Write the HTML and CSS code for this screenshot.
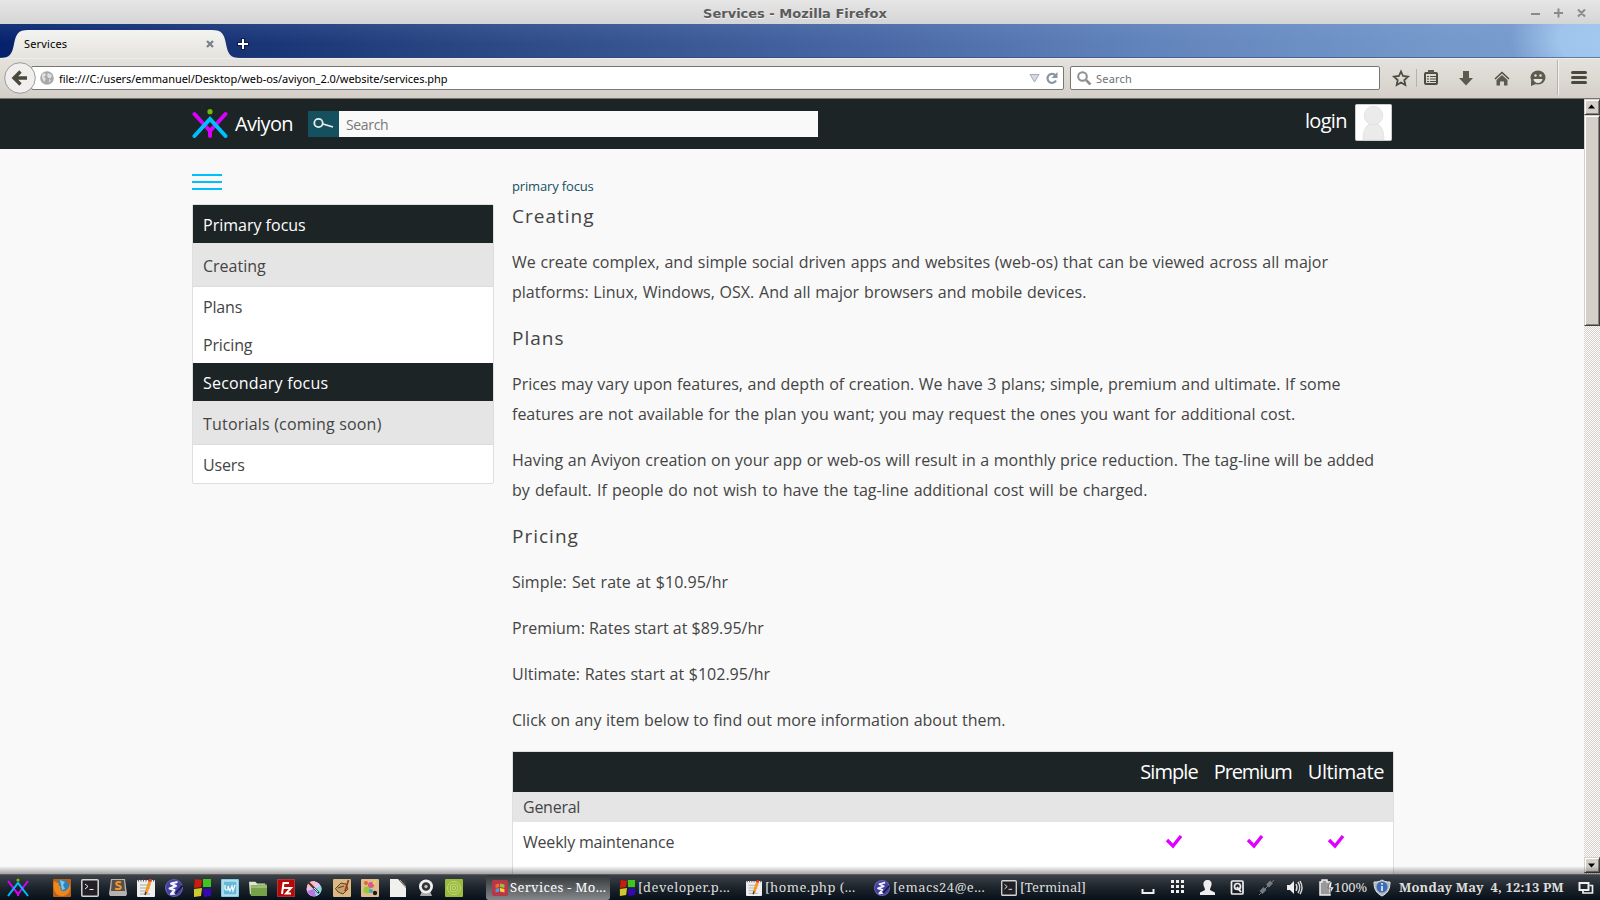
FILE: index.html
```html
<!DOCTYPE html>
<html lang="en">
<head>
<meta charset="utf-8">
<title>Services</title>
<link rel="stylesheet" href="styles.css">
</head>
<body>
<svg class="defs" width="0" height="0">
  <defs>
    <symbol id="logo" viewBox="0 0 36 30">
      <g fill="none" stroke-width="4" stroke-linecap="round" stroke-linejoin="round">
        <path stroke="#d900ff" d="M2.500 5L18 22L33.500 5M18 22V27" />
        <path stroke="#00bfff" d="M2.500 27L18 10L33.500 27" stroke-linejoin="miter"/>
      </g>
      <circle cx="18" cy="2.700" r="2.600" fill="#77b800"/>
    </symbol>
    <symbol id="check" viewBox="0 0 18 16">
      <path d="M2 6L8 12L16 2" fill="none" stroke="#e000ff" stroke-width="3.400"/>
    </symbol>
    <symbol id="term" viewBox="0 0 18 18">
      <rect x=".8" y=".8" width="16.400" height="16.400" rx="1" fill="#222026" stroke="#d4d4d0" stroke-width="1.500"/>
      <path d="M4 5l3 2.500L4 10M8.500 10.500h4" fill="none" stroke="#eee"/>
    </symbol>
    <symbol id="notes" viewBox="0 0 18 18">
      <rect x="0" y="1" width="18" height="17" rx="1" fill="#eee"/>
      <path d="M1 1.500h16" stroke="#555" stroke-width="2" stroke-dasharray="1 1.500"/>
      <path d="M3 6h11M3 9h10M3 12h8M3 15h10" stroke="#aaa"/>
      <path d="M13 2L9 14" stroke="#f39a1b" stroke-width="3"/><path d="M13.500 0L13 2.500" stroke="#d33" stroke-width="3"/><path d="M9 13l-1 3" stroke="#333" stroke-width="1.500"/>
    </symbol>
    <symbol id="emacs" viewBox="0 0 18 18">
      <circle cx="9" cy="9" r="9" fill="#6865b0"/><circle cx="9" cy="9" r="8" fill="#4340a0"/>
      <path d="M12.500 3L6 4.500L11 7L4.500 9.500L9.500 11L6 15L11 14.500" fill="none" stroke="#f4f4ff" stroke-width="2" stroke-linejoin="round"/>
      <path d="M17.500 6.500L10 15" stroke="#16163c" stroke-width="1.600"/>
    </symbol>
    <symbol id="blocks" viewBox="0 0 18 18">
      <path d="M2 0L9 1 8 8 1 9z" fill="#cf1b0c"/><path d="M10 0h8v8h-8z" fill="#3fc51e"/><path d="M1 10l8-1-1 8-7 1z" fill="#cfc92c"/><path d="M10 10l8-1v8l-7 1z" fill="#3508b5"/>
    </symbol>
  </defs>
</svg>

<header class="titlebar">
  <span class="side"></span>
  <span class="window-title">Services - Mozilla Firefox</span>
  <span class="side controls">
    <svg width="58" height="14" viewBox="0 0 58 14"><g fill="none" stroke="#8a8a8a" stroke-width="2"><path d="M1 8h9M24 7h9M28.500 2.500v9M48 3.500l7 7M55 3.500l-7 7"/></g></svg>
  </span>
</header>

<div class="tabstrip">
  <svg class="tab-shape" width="240" height="34" viewBox="0 0 240 34">
    <defs><linearGradient id="tabfill" x2="0" y2="1"><stop offset="0" stop-color="#f3f3f1"/><stop offset="1" stop-color="#e5e3de"/></linearGradient></defs>
    <path d="M0 34C10 34 12 30 14 20C16 10 18 6 28 6H212C222 6 224 10 226 20C228 30 230 34 240 34Z" fill="url(#tabfill)"/>
  </svg>
  <div class="tab-row">
    <span class="tab-title">Services</span>
    <svg width="8" height="8" viewBox="0 0 8 8"><path d="M1 1l6 6M7 1L1 7" stroke="#7b8287" stroke-width="2.300"/></svg>
    <svg class="new-tab" width="12" height="12" viewBox="0 0 12 12"><path d="M6 0v12M0 6h12" stroke="#0d1a48" stroke-width="4"/><path d="M6 1v10M1 6h10" stroke="#fff" stroke-width="2"/></svg>
  </div>
</div>

<nav class="toolbar">
  <svg class="back" width="32" height="32" viewBox="0 0 32 32"><circle cx="16" cy="16" r="15.300" fill="#f0efed" stroke="#9a9b9b"/><path d="M16.500 9.500L10 16l6.500 6.500M11 16h12" fill="none" stroke="#4b493d" stroke-width="3.400"/></svg>
  <div class="urlbar">
    <svg width="14" height="14" viewBox="0 0 14 14"><circle cx="7" cy="7" r="6.800" fill="#a8a8a8"/><path d="M2 3l3-1 1 2-2 2 2 2-2 3-2-4zM8 2l4 2-1 3-3 0-1-3zM9 8l2 1-2 3z" fill="#dedede"/></svg>
    <span class="url">file:///C:/users/emmanuel/Desktop/web-os/aviyon_2.0/website/services.php</span>
    <svg width="30" height="14" viewBox="0 0 30 14"><path d="M1 3.500h9L5.500 11z" fill="#d5dae2" stroke="#a6adb8"/><path d="M26.500 4.500A4.500 4.500 0 1 0 27 9.500" fill="none" stroke="#8996a2" stroke-width="2.200"/><path d="M28.500 1v6h-6z" fill="#8996a2"/></svg>
  </div>
  <div class="searchbar">
    <svg width="15" height="15" viewBox="0 0 15 15"><circle cx="5.500" cy="5.500" r="4.300" fill="none" stroke="#8f8f8f" stroke-width="2"/><path d="M9 9l4.500 4.500" stroke="#8f8f8f" stroke-width="2.500"/></svg>
    <span>Search</span>
  </div>
  <svg class="tools" width="206" height="41" viewBox="1386 58 206 41">
    <g fill="none" stroke="#4e4c40" stroke-width="2">
      <path d="M1401 71.500l2 4.500 5 .6-3.700 3.400 1 5-4.300-2.500-4.300 2.500 1-5-3.700-3.400 5-.6z" stroke-width="1.800"/>
      <rect x="1425" y="73" width="12" height="11" rx="1"/><path d="M1427 76.500h2M1430 76.500h6M1427 79h2M1430 79h6M1427 81.500h2M1430 81.500h6" stroke-width="1.200"/>
      <path d="M1495 79l7-6.500 7 6.500" stroke-width="1.500"/>
      <path d="M1572.500 72.500h13M1572.500 77.500h13M1572.500 82.500h13" stroke="#4b493d" stroke-width="3" stroke-linecap="round"/>
    </g>
    <g fill="#5d5b4f">
      <path d="M1428 70h6v3h-6zM1463 71h6v7h4l-7 7.500-7-7.500h4zM1502 75l5.500 5v5.500h-3.500v-4h-4v4h-3.500v-5.500z"/>
      <ellipse cx="1538" cy="77.500" rx="7.500" ry="7"/><path d="M1531 80l0 6 5-2z"/>
    </g>
    <path d="M1533.500 79h9a4.500 4 0 0 1-9 0z" fill="#e6e3dc"/><circle cx="1535.500" cy="75.500" r="1.200" fill="#e6e3dc"/><circle cx="1540.500" cy="75.500" r="1.200" fill="#e6e3dc"/>
    <path d="M1416.500 69v18M1557.500 60v35" stroke="#b3b3b0"/><path d="M1558.500 60v35" stroke="#f3f2ef"/>
  </svg>
</nav>

<div class="viewport">
  <div class="page">
    <div class="site-header">
      <svg class="logo" width="36" height="30"><use href="#logo"/></svg>
      <span class="brand">Aviyon</span>
      <div class="site-search">
        <span class="search-btn"><svg width="22" height="14" viewBox="0 0 22 14"><circle cx="5.500" cy="6" r="4.200" fill="none" stroke="#eee" stroke-width="1.800"/><path d="M10 7l10 3" stroke="#eee" stroke-width="1.800"/></svg></span>
        <span class="placeholder">Search</span>
      </div>
      <span class="login">login</span>
      <svg class="avatar" width="37" height="37" viewBox="0 0 37 37"><rect x=".5" y=".5" width="36" height="36" rx="1" fill="#fff" stroke="#ccc"/><g fill="#ebebeb" stroke="#ddd" stroke-width=".7"><path d="M8 36C8 25 12 19 18.500 19S29 25 29 36z"/><circle cx="18.500" cy="11.500" r="9.300"/></g></svg>
    </div>
    <div class="columns">
      <aside>
        <div class="burger"><i></i><i></i><i></i></div>
        <ul class="menu">
          <li class="head">Primary focus</li>
          <li class="on">Creating</li>
          <li class="tight">Plans</li>
          <li class="tight">Pricing</li>
          <li class="head loose">Secondary focus</li>
          <li class="on loose">Tutorials (coming soon)</li>
          <li class="tight">Users</li>
        </ul>
      </aside>
      <main>
        <div class="crumb">primary focus</div>
        <h2>Creating</h2>
        <p><span class="l1">We create complex, and simple social driven apps and websites (web-os) that can be viewed across all major</span><br><span class="l2">platforms: Linux, Windows, OSX. And all major browsers and mobile devices.</span></p>
        <h2>Plans</h2>
        <p><span class="l3">Prices may vary upon features, and depth of creation. We have 3 plans; simple, premium and ultimate. If some</span><br><span class="l4">features are not available for the plan you want; you may request the ones you want for additional cost.</span></p>
        <p><span class="l5">Having an Aviyon creation on your app or web-os will result in a monthly price reduction. The tag-line will be added</span><br><span class="l6">by default. If people do not wish to have the tag-line additional cost will be charged.</span></p>
        <h2>Pricing</h2>
        <p><span class="l7">Simple: Set rate at $10.95/hr</span></p>
        <p>Premium: Rates start at $89.95/hr</p>
        <p><span class="l9">Ultimate: Rates start at $102.95/hr</span></p>
        <p><span class="l10">Click on any item below to find out more information about them.</span></p>
        <div class="table">
          <div class="trow thead"><span class="simple">Simple</span><span class="premium">Premium</span><span class="ultimate">Ultimate</span></div>
          <div class="section">General</div>
          <div class="trow feature"><span>Weekly maintenance</span><svg width="18" height="16"><use href="#check"/></svg><svg width="18" height="16"><use href="#check"/></svg><svg width="18" height="16"><use href="#check"/></svg></div>
        </div>
      </main>
    </div>
  </div>
  <div class="scrollbar">
    <div class="sb-btn"><svg width="8" height="5" viewBox="0 0 8 5"><path d="M0 4.500h7L3.500 .5z"/></svg></div>
    <div class="thumb"></div>
    <div class="track"></div>
    <div class="sb-btn"><svg width="8" height="5" viewBox="0 0 8 5"><path d="M0 .5h7L3.500 4.500z"/></svg></div>
  </div>
  <div class="panel-shadow"></div>
</div>

<footer class="taskbar">
  <svg class="start" width="24" height="20" viewBox="0 0 24 20"><path d="M2 3l10 13L22 3M12 15v3" fill="none" stroke="#d900ff" stroke-width="2"/><path d="M2 18L12 5l10 13" fill="none" stroke="#00bfff" stroke-width="2"/><circle cx="12" cy="2" r="1.600" fill="#77b800"/></svg>
  <div class="launchers">
    <svg viewBox="0 0 18 18"><rect width="18" height="18" rx="1" fill="#b9601b"/><circle cx="9.500" cy="8" r="7" fill="#2c82bd"/><path d="M7 1l5 2-2 3 2 4-3 1z" fill="#80c5e8"/><path d="M1 2c2 1 3 2 5 2-1 2 0 3 2 4-2 2 1 5 4 4 3-1 5-4 4-8 3 6 0 12-6 13S-1 12 1 2z" fill="#f1871b"/></svg>
    <svg><use href="#term"/></svg>
    <svg viewBox="0 0 18 18"><path d="M2 0h14l2 15-1 2H1l-1-2z" fill="#b6b3ae"/><path d="M3 1h12l1 11H2z" fill="#554f4b"/><path d="M12 3.500C8 2 6 4 8 6l3 1c2 2 0 4-5 2.500" fill="none" stroke="#f5982b" stroke-width="2"/></svg>
    <svg><use href="#notes"/></svg>
    <svg><use href="#emacs"/></svg>
    <svg><use href="#blocks"/></svg>
    <svg viewBox="0 0 18 18"><rect width="18" height="18" rx="1" fill="#7fcbe6"/><rect x="2" y="2" width="14" height="14" fill="#65b8d9" stroke="#dff5fb"/><path d="M4 6v4l1 1h2V7l2 5 2-5 1 5 2-6" fill="none" stroke="#fff" stroke-width="1.200"/></svg>
    <svg viewBox="0 0 20 18"><path d="M0 2h7l2 2h9v12H1z" fill="#dfe5d3"/><path d="M2 6h6l2-1h10v13H2z" fill="#78a24a"/><path d="M2 7h6l2-1h10v3H2z" fill="#9dbd74"/></svg>
    <svg viewBox="0 0 18 18"><rect x=".5" y=".5" width="17" height="17" fill="#b80808" stroke="#e55" stroke-dasharray="1 1"/><path d="M5 15L6.500 4H12M5.500 9H10M9.500 9H14L9 14.500H14" fill="none" stroke="#fff" stroke-width="2"/></svg>
    <svg viewBox="0 0 18 18"><circle cx="9" cy="10" r="7.500" fill="#e9c3ee"/><path d="M9 10L2 7a7.500 7.500 0 0 1 8-5z" fill="#ffb8b8"/><path d="M9 10l7-3a7.500 7.500 0 0 1-5 10z" fill="#7edce4"/><path d="M9 10l2 7a7.500 7.500 0 0 1-9-5z" fill="#b478e6"/><path d="M2 2L14 14" stroke="#333" stroke-width="1.800"/><path d="M9 9l4 4" stroke="#ddd"/></svg>
    <svg viewBox="0 0 18 18"><rect width="18" height="18" rx="1" fill="#dbb982"/><path d="M2.500 9.500L8 4l5 1 2 5-5 5-5-2zM5 9l6-2" fill="#c8a068" stroke="#5c4328"/><path d="M15.500 1L12 12" stroke="#9b3821" stroke-width="1.700"/></svg>
    <svg viewBox="0 0 18 18"><rect width="18" height="18" rx="1" fill="#dfbd91"/><circle cx="6" cy="11" r="3.500" fill="#9ac736"/><circle cx="10" cy="6" r="3" fill="#de5590"/><circle cx="5" cy="4" r="2" fill="#e3672c"/><circle cx="10" cy="12" r="2" fill="#36a6d1"/><path d="M12 5l3-3" stroke="#e6dd37" stroke-width="2"/><circle cx="14" cy="14" r="2.200" fill="#211b16"/></svg>
    <svg viewBox="0 0 18 18"><path d="M1 0h10l6 7v11H1z" fill="#f0f0ef"/><path d="M9 0h8v9z" fill="#39393b"/><path d="M11 1l6 7" stroke="#aaa"/></svg>
    <svg viewBox="0 0 18 18"><path d="M5 12h8l2 5H3z" fill="#aaa"/><circle cx="9" cy="7.500" r="7" fill="#f0f0f0"/><circle cx="9" cy="7.500" r="4.300" fill="#333"/><circle cx="9" cy="7.500" r="1.700" fill="#a9c2d0"/></svg>
    <svg viewBox="0 0 18 18"><rect width="18" height="18" rx="1" fill="#9abb42"/><g fill="none" stroke="#c3d777" stroke-width="1"><circle cx="9" cy="9" r="6.500"/><circle cx="9" cy="9" r="4"/><circle cx="9" cy="9" r="1.700"/></g></svg>
  </div>
  <div class="tasks">
    <div class="task active"><svg viewBox="0 0 18 18"><rect width="18" height="18" rx="2" fill="#b63748"/><path d="M4 5l4-1v4l-4 1z" fill="#f26b2b"/><path d="M9 4l5 1v4L9 8z" fill="#8bc53f"/><path d="M4 10l4-1v4l-4 1z" fill="#40a6dd"/><path d="M9 9l5 1v4l-5-1z" fill="#ffd23b"/></svg><span>Services - Mo...</span></div>
    <div class="task"><svg><use href="#blocks"/></svg><span class="wide">[developer.p...</span></div>
    <div class="task"><svg><use href="#notes"/></svg><span class="wide">[home.php (...</span></div>
    <div class="task emacs"><svg><use href="#emacs"/></svg><span class="wide">[emacs24@e...</span></div>
    <div class="task last"><svg><use href="#term"/></svg><span>[Terminal]</span></div>
  </div>
  <svg class="tray" width="194" height="24" viewBox="1140 876 194 24">
    <path d="M1142.500 889v4h11v-4" fill="none" stroke="#eee" stroke-width="2"/>
    <path d="M1171 881.500h13M1171 886.500h13M1171 891.500h13" stroke="#eee" stroke-width="3" stroke-dasharray="3 2"/>
    <path d="M1207.500 880c3 0 4.500 2 4 5-.3 2-1.500 3-1.500 5l5 2.500V895h-15v-2.500l5-2.500c0-2-1.200-3-1.500-5-.5-3 1-5 4.500-5z" fill="#eee"/>
    <rect x="1231.500" y="881" width="11.500" height="13" rx="1" fill="none" stroke="#eee" stroke-width="1.700"/><circle cx="1237.500" cy="886.500" r="3" fill="none" stroke="#eee" stroke-width="1.700"/><path d="M1237 887l4 5" stroke="#eee" stroke-width="2"/>
    <path d="M1261 892.500l4-4M1267.500 886l4-4" stroke="#777b80" stroke-width="4"/><path d="M1259 895l15-15" stroke="#777b80"/>
    <path d="M1287 885h3l4-4v13l-4-4h-3z" fill="#eee"/><path d="M1296 884q2 3.500 0 7M1298 882q3.500 5.500 0 11M1300 881q4 7 0 13" fill="none" stroke="#ddd" stroke-width="1.400"/>
    <path d="M1320 882h2v-2h5v2h3v13h-10z" fill="#999" stroke="#eee" stroke-width="1.500"/><path d="M1330 882l-2 6h3l-1 6 4-7h-3l1-5z" fill="#fff" stroke="#222" stroke-width=".5"/>
  </svg>
  <span class="battery">100%</span>
  <svg class="shield" width="18" height="18" viewBox="0 0 18 18"><path d="M9 1C6 3 4 3 1 3c0 7 2 11 8 14 6-3 8-7 8-14-3 0-5 0-8-2z" fill="#aeb9c5" stroke="#e4e6e8"/><circle cx="9" cy="8" r="5.500" fill="#3c6cb1"/><path d="M9 7v5M9 4v1.800" stroke="#d7e4f3" stroke-width="1.800"/></svg>
  <span class="clock">Monday May&nbsp; 4, 12:13 PM</span>
  <svg class="winlist" width="16" height="14" viewBox="0 0 16 14"><path d="M5 9.500v2.500h9.500v-7.500h-3" fill="none" stroke="#eee" stroke-width="1.700"/><rect x="1.500" y="2" width="9" height="7" fill="none" stroke="#eee" stroke-width="2"/></svg>
</footer>
</body>
</html>
```
FILE: styles.css
```css
* { box-sizing: border-box; }
body { margin: 0; width: 1600px; height: 900px; overflow: hidden; display: flex; flex-direction: column; font-family: "Open Sans", "Noto Sans", sans-serif; color: #444; background: #f9f9f9; }
svg { display: block; flex: none; }
.defs { position: absolute; }
span { white-space: nowrap; }

.titlebar { height: 24px; flex: none; display: flex; align-items: center; padding: 2px 0 0 1px; background: linear-gradient(#e6e6e6, #d5d5d5); font: bold 13px "DejaVu Sans", sans-serif; color: #5b5b5b; }
.side { flex: 1; display: flex; justify-content: flex-end; padding-right: 12px; }
.side:first-child { padding: 0 1px 0 0; }
.window-title { text-shadow: 0 1px #f2f2f2; }

.tabstrip { height: 34px; flex: none; display: flex; position: relative; background: radial-gradient(ellipse 90px 60px at 1600px 15px, #a3c8ef 0%, #a0c5ec 45%, rgba(160,197,236,0) 100%), linear-gradient(rgba(140,180,230,.12), transparent 60%), linear-gradient(94deg, #05216b 0%, #1c3777 18%, #2c4985 31%, #4968a5 55%, #6284bc 72%, #7598ca 90%, #7b9dd0 100%); border-bottom: 1px solid rgba(30, 50, 100, .5); }
.tab-shape { position: absolute; left: 0; top: 0; }
.tab-row { position: relative; display: flex; align-items: center; padding: 6px 0 0 24px; font: 11px "Noto Sans", sans-serif; color: #000; }
.tab-title { width: 182px; letter-spacing: .15px; }
.new-tab { margin-left: 23px; }

.toolbar { height: 41px; flex: none; display: flex; align-items: center; padding: 0 8px 0 4px; background: linear-gradient(#e5e3de, #d4cfc8); border-bottom: 1px solid #77736d; box-shadow: inset 0 1px #eeede9; font: 11px "Noto Sans", sans-serif; }
.back { position: relative; z-index: 1; }
.urlbar { width: 1033px; height: 24px; margin-left: -5px; padding: 0 4px 0 8px; display: flex; align-items: center; background: #fff; border: 1px solid #777; border-radius: 2px; color: #000; }
.url { flex: 1; margin-left: 5px; letter-spacing: -.04px; }
.searchbar { width: 310px; height: 24px; margin-left: 6px; padding-left: 6px; display: flex; align-items: center; gap: 4px; background: #fff; border: 1px solid #777; border-radius: 2px; color: #707070; }
.url, .searchbar span { padding-top: 1px; }
.searchbar span { letter-spacing: .2px; }
.tools { margin-left: 6px; }

.viewport { flex: 1; min-height: 0; display: flex; position: relative; overflow: hidden; }
.page { flex: 1; overflow: hidden; }
.site-header { height: 50px; padding-left: 192px; display: flex; background: #1d2426; color: #fff; }
.logo { margin-top: 10px; }
.brand { width: 73px; margin-left: 7px; line-height: 50px; font-size: 20px; letter-spacing: -.7px; }
.site-search { width: 510px; height: 26px; margin-top: 12px; display: flex; background: #f9f9f9; }
.search-btn { width: 31px; display: flex; align-items: center; padding-left: 5px; background: #15505f; }
.placeholder { padding-left: 7px; line-height: 27px; font-size: 14px; letter-spacing: -.35px; color: #777; }
.login { width: 50px; margin-left: 487px; line-height: 44px; font-size: 20px; letter-spacing: -.7px; }
.avatar { margin-top: 5px; }

.columns { display: flex; padding-left: 192px; gap: 18px; }
aside { width: 302px; padding-top: 25px; }
.burger { width: 30px; display: grid; gap: 5px; }
.burger i { height: 2px; background: #00bfff; }
.menu { margin: 14px 0 0; padding: 0; list-style: none; background: #fff; border: 1px solid #dedede; border-radius: 2px; font-size: 16px; }
.menu li { height: 38px; line-height: 40px; padding-left: 10px; }
.menu .head { background: #1d2426; color: #fff; }
.menu .on { height: 44px; line-height: 46px; background: #e5e5e5; border-bottom: 1px solid #dcdcdc; }
.menu .loose { letter-spacing: .19px; }
.menu .tight { letter-spacing: -.15px; }
main { width: 882px; padding-top: 22px; font-size: 16px; line-height: 30px; }
.crumb { font-size: 13px; letter-spacing: -.15px; color: #15505f; }
h2 { margin: 0 0 16px; font-size: 19px; font-weight: 400; letter-spacing: 1px; }
p { margin: 0 0 16px; }
.l1 { word-spacing: .68px; }
.l2 { word-spacing: .6px; }
.l3 { word-spacing: .4px; }
.l4 { word-spacing: .66px; }
.l5 { word-spacing: .41px; }
.l6 { word-spacing: 1px; }
.l7 { word-spacing: 1.100px; }
.l9 { word-spacing: .5px; }
.l10 { word-spacing: .36px; }
.table { border: 1px solid #dedede; background: #fff; height: 200px; }
.trow { display: flex; align-items: center; }
.thead { height: 40px; padding: 0 9px; gap: 16px; justify-content: flex-end; background: #1d2426; color: #fff; font-size: 20px; }
.simple { letter-spacing: -.95px; }
.premium { letter-spacing: -1.100px; }
.ultimate { letter-spacing: -.45px; }
.section { height: 30px; padding-left: 10px; background: #e5e5e5; letter-spacing: -.25px; }
.feature { height: 40px; padding: 0 48px 0 10px; gap: 63px; letter-spacing: -.2px; }
.feature span { flex: 1; }

.scrollbar { width: 16px; display: flex; flex-direction: column; background: repeating-conic-gradient(#fff 0 25%, #d4cfc8 0 50%) 0 0 / 2px 2px; }
.sb-btn, .thumb { background: #d4cfc8; border: 1px solid; border-color: #d4cfc8 #404040 #404040 #d4cfc8; box-shadow: inset 1px 1px #fff, inset -1px -1px #858179; }
.sb-btn { height: 16px; padding-bottom: 2px; display: flex; align-items: center; justify-content: center; }
.sb-btn:last-child { margin-bottom: 1px; padding: 0; }
.thumb { height: 211px; }
.track { flex: 1; }
.panel-shadow { position: absolute; left: 0; right: 0; bottom: 0; height: 8px; background: linear-gradient(transparent, rgba(0,0,0,.35)); }

.taskbar { height: 26px; flex: none; display: flex; align-items: center; padding-left: 6px; border-top: 1px solid #5c5e60; background: linear-gradient(#3c4248, #1d242b 50%, #07101a); font: 13px "Noto Serif", "DejaVu Serif Condensed", "DejaVu Serif", serif; color: #ddd; }
.launchers { display: flex; gap: 10px; margin-left: 23px; }
.launchers svg { width: 18px; height: 18px; }
.tasks { display: flex; margin-left: 23px; height: 25px; }
.task { width: 127px; display: flex; align-items: center; gap: 3px; padding-left: 6px; }
.task svg { width: 16px; height: 16px; }
.task span { padding-bottom: 1px; }
.task .wide { letter-spacing: .42px; }
.task.emacs { padding-left: 7px; }
.task.last { padding-left: 7px; }
.task.active { width: 124px; margin-right: 3px; gap: 2px; background: linear-gradient(#33373a, #85878a); border-radius: 3px; color: #fff; letter-spacing: .32px; }
.tray { margin-left: 19px; }
.battery { width: 39px; letter-spacing: -.1px; }
.shield { margin-right: 8px; }
.battery, .clock { padding-bottom: 1px; }
.clock { width: 179px; font-weight: bold; letter-spacing: .12px; }
```
